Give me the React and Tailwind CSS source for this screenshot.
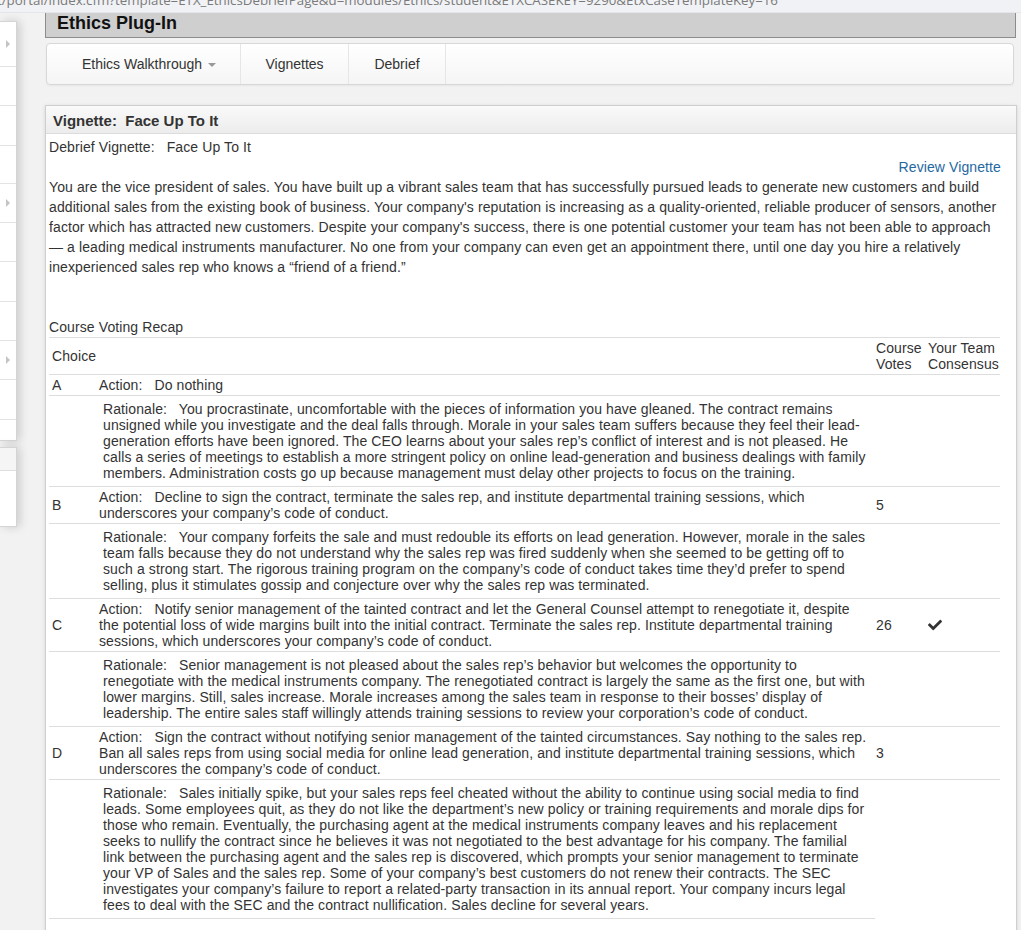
import { FaCheck } from 'react-icons/fa';

const sideRows = [
  { h: 'h-[45px]', arrow: true },
  { h: 'h-[39px]' },
  { h: 'h-[40px]' },
  { h: 'h-[38px]' },
  { h: 'h-[39px]', arrow: true },
  { h: 'h-[39px]' },
  { h: 'h-[40px]' },
  { h: 'h-[39px]' },
  { h: 'h-[39px]', arrow: true },
  { h: 'h-[40px]' },
  { h: 'h-[20px]' },
];

const choices = [
  {
    letter: 'A',
    action: 'Do nothing',
    rationale:
      'You procrastinate, uncomfortable with the pieces of information you have gleaned. The contract remains unsigned while you investigate and the deal falls through. Morale in your sales team suffers because they feel their lead-generation efforts have been ignored. The CEO learns about your sales rep’s conflict of interest and is not pleased. He calls a series of meetings to establish a more stringent policy on online lead-generation and business dealings with family members. Administration costs go up because management must delay other projects to focus on the training.',
    votes: '',
    consensus: false,
  },
  {
    letter: 'B',
    action:
      'Decline to sign the contract, terminate the sales rep, and institute departmental training sessions, which underscores your company’s code of conduct.',
    rationale:
      'Your company forfeits the sale and must redouble its efforts on lead generation. However, morale in the sales team falls because they do not understand why the sales rep was fired suddenly when she seemed to be getting off to such a strong start. The rigorous training program on the company’s code of conduct takes time they’d prefer to spend selling, plus it stimulates gossip and conjecture over why the sales rep was terminated.',
    votes: '5',
    consensus: false,
  },
  {
    letter: 'C',
    action:
      'Notify senior management of the tainted contract and let the General Counsel attempt to renegotiate it, despite the potential loss of wide margins built into the initial contract. Terminate the sales rep. Institute departmental training sessions, which underscores your company’s code of conduct.',
    rationale:
      'Senior management is not pleased about the sales rep’s behavior but welcomes the opportunity to renegotiate with the medical instruments company. The renegotiated contract is largely the same as the first one, but with lower margins. Still, sales increase. Morale increases among the sales team in response to their bosses’ display of leadership. The entire sales staff willingly attends training sessions to review your corporation’s code of conduct.',
    votes: '26',
    consensus: true,
  },
  {
    letter: 'D',
    action:
      'Sign the contract without notifying senior management of the tainted circumstances. Say nothing to the sales rep. Ban all sales reps from using social media for online lead generation, and institute departmental training sessions, which underscores the company’s code of conduct.',
    rationale:
      'Sales initially spike, but your sales reps feel cheated without the ability to continue using social media to find leads. Some employees quit, as they do not like the department’s new policy or training requirements and morale dips for those who remain. Eventually, the purchasing agent at the medical instruments company leaves and his replacement seeks to nullify the contract since he believes it was not negotiated to the best advantage for his company. The familial link between the purchasing agent and the sales rep is discovered, which prompts your senior management to terminate your VP of Sales and the sales rep. Some of your company’s best customers do not renew their contracts. The SEC investigates your company’s failure to report a related-party transaction in its annual report. Your company incurs legal fees to deal with the SEC and the contract nullification. Sales decline for several years.',
    votes: '3',
    consensus: false,
  },
];

const RightArrow = () => (
  <span className="block w-0 h-0 border-y-[4px] border-y-transparent border-l-[4px] border-l-[#c4c4c4]" />
);

const Sidebar = () => (
  <aside className="w-[17px] shrink-0 pt-[8px]">
    <div className="bg-white border-t border-r border-b border-[#d4d4d4] shadow-[3px_0_10px_rgba(0,0,0,0.16)]">
      {sideRows.map((row, i) => (
        <div
          key={i}
          className={`${row.h} flex items-center pl-[6px] ${i < sideRows.length - 1 ? 'border-b border-[#e3e3e3]' : ''}`}
        >
          {row.arrow && <RightArrow />}
        </div>
      ))}
    </div>
    <div className="mt-[6px] bg-white border-t border-r border-b border-[#d4d4d4] shadow-[3px_0_10px_rgba(0,0,0,0.16)]">
      <div className="h-[23px] bg-[#f5f5f5] border-b border-[#dedede]" />
      <div className="h-[55px]" />
    </div>
  </aside>
);

const NavBar = () => (
  <nav className="mt-[5px] ml-[1px] w-[968px] h-[42px] flex rounded-[4px] border border-[#d8d8d8] bg-gradient-to-b from-white to-[#f5f5f5] shadow-[0_1px_2px_rgba(0,0,0,0.05)] text-[14px] text-[#333]">
    <div className="w-[194px] flex items-center pl-[35px] border-r border-[#e6e6e6]">
      <span>Ethics Walkthrough</span>
      <span className="ml-[6px] mt-[1px] w-0 h-0 border-x-[4px] border-x-transparent border-t-[4px] border-t-[#999]" />
    </div>
    <div className="w-[108px] flex items-center justify-center border-r border-[#e6e6e6]">Vignettes</div>
    <div className="w-[97px] flex items-center justify-center border-r border-[#e6e6e6]">Debrief</div>
  </nav>
);

const VotingTable = () => (
  <div className="w-[951px] text-[14px] leading-[16px]">
    <div className="grid grid-cols-[47px_777px_52px_75px] border-t border-[#dddddd]">
      <div className="px-[3px] py-[2px] flex items-center">Choice</div>
      <div />
      <div className="px-[3px] py-[2px]">
        Course
        <br />
        Votes
      </div>
      <div className="px-[3px] py-[2px] whitespace-nowrap">
        Your Team
        <br />
        Consensus
      </div>
    </div>
    {choices.map((c) => (
      <div key={c.letter}>
        <div className="grid grid-cols-[47px_777px_52px_75px] border-t border-[#dddddd]">
          <div className="px-[3px] py-[2px] flex items-center">{c.letter}</div>
          <div className="px-[3px] py-[2px]">
            Action:&nbsp;&nbsp; {c.action}
          </div>
          <div className="px-[3px] py-[2px] flex items-center">{c.votes}</div>
          <div className="px-[3px] py-[2px] flex items-center">
            {c.consensus && <FaCheck className="w-[14px] h-[14px] text-[#333]" />}
          </div>
        </div>
        <div className="grid grid-cols-[47px_777px_52px_75px] border-t border-[#dddddd]">
          <div />
          <div className="pl-[7px] pr-[3px] py-[5px]">
            Rationale:&nbsp;&nbsp; {c.rationale}
          </div>
          <div />
          <div />
        </div>
      </div>
    ))}
    <div className="w-[826px] border-t border-[#dddddd]" />
  </div>
);

export default function App() {
  return (
    <div className="h-[930px] overflow-hidden bg-[#f2f2f2] font-['Liberation_Sans',Arial,sans-serif] text-[#333]">
      {/* address strip, mostly scrolled away */}
      <div className="h-[13px] overflow-hidden bg-[#f1f2f5] border-b border-[#e4e5e9]">
        <div className="-mt-[10px] -ml-[3px] whitespace-nowrap text-[13.3px] leading-[20px] text-[#7a7a7a] font-['Open_Sans',sans-serif]">
          t/portal/index.cfm?template=ETX_EthicsDebriefPage&amp;d=modules/Ethics/student&amp;ETXCASEKEY=9290&amp;EtxCaseTemplateKey=16
        </div>
      </div>

      <div className="flex">
        <Sidebar />

        <main className="ml-[28px] w-[972px]">
          <div className="h-[25px] w-[971px] bg-[#cfcfcf] border-x border-b border-[#8c8c8c] pl-[11px]">
            <h1 className="text-[18px] leading-[20px] font-bold text-[#111]">Ethics Plug-In</h1>
          </div>

          <NavBar />

          <section className="mt-[20px] bg-white border border-[#cfcfcf] shadow-[0_1px_4px_rgba(0,0,0,0.12)] pb-[40px]">
            <header className="h-[28px] pt-[4px] px-[7px] flex items-center bg-gradient-to-b from-[#fafafa] to-[#ececec] border-b border-[#dcdcdc] text-[15px] font-bold text-[#333]">
              Vignette:&nbsp; Face Up To It
            </header>

            <div className="pl-[3px] pr-[15px] pt-[3px] text-[14px] leading-[20px] tracking-[0.1px]">
              <div>Debrief Vignette:&nbsp;&nbsp; Face Up To It</div>
              <div className="text-right">
                <a className="text-[#2468a2]">Review Vignette</a>
              </div>
              <p>
                You are the vice president of sales. You have built up a vibrant sales team that has successfully pursued leads to generate new customers and build additional sales from the existing book of business. Your company's reputation is increasing as a quality-oriented, reliable producer of sensors, another factor which has attracted new customers. Despite your company's success, there is one potential customer your team has not been able to approach — a leading medical instruments manufacturer. No one from your company can even get an appointment there, until one day you hire a relatively inexperienced sales rep who knows a “friend of a friend.”
              </p>

              <div className="mt-[40px]">Course Voting Recap</div>
              <VotingTable />
            </div>
          </section>
        </main>
      </div>
    </div>
  );
}
